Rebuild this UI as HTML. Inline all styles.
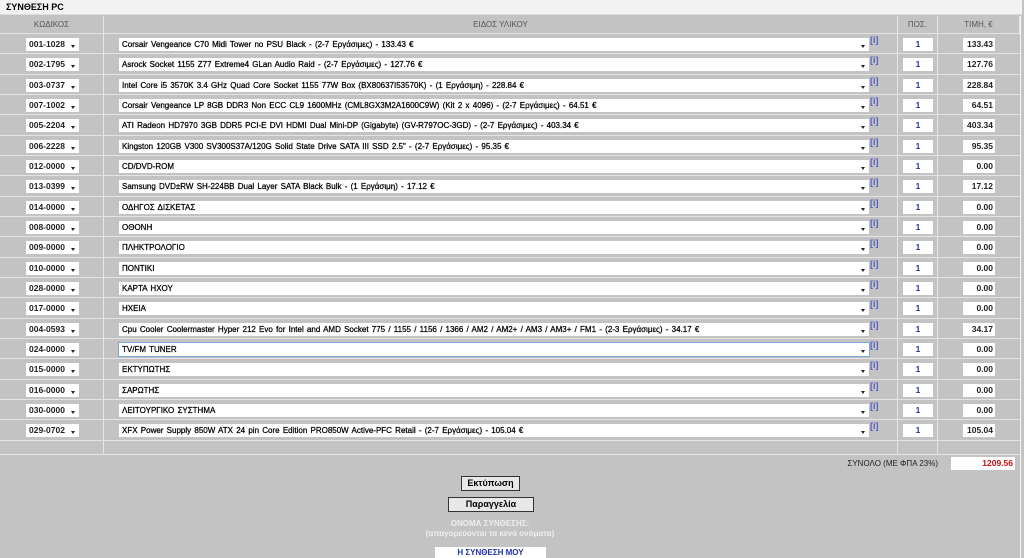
<!DOCTYPE html><html><head><meta charset="utf-8"><style>
body{margin:0;width:1024px;height:558px;background:#c3c3c3;font-family:"Liberation Sans","DejaVu Sans",sans-serif;position:relative;overflow:hidden;font-size:9px}
.hd{position:absolute;left:0;top:0;width:1022px;height:15px;background:#f2f2f2;font-weight:bold;font-size:9px;line-height:15px;padding-left:6px;box-sizing:border-box;border-bottom:1px solid #ddd}
.ch{position:absolute;top:16px;height:17px;line-height:17px;text-align:center;color:#555;font-size:8px;border-right:1px solid #e6e6e6;box-sizing:border-box}
.r{position:absolute;left:0;width:1020px;height:20px;border-top:1px solid #e4e4e4}
.c{position:absolute;top:4px;left:26px;width:53px;height:13px;background:#fff;line-height:13px;padding-left:3px;box-sizing:border-box;font-size:8.5px;font-weight:bold;color:#222}
.c:after,.d:after{content:"";position:absolute;right:4px;top:7px;border:2px solid transparent;border-top:3px solid #222;border-bottom:0}
.d{position:absolute;top:4px;left:119px;width:750px;height:13px;background:#fff;line-height:13px;padding-left:3px;box-sizing:border-box;font-size:8px;color:#000;-webkit-text-stroke:0.25px #000;word-spacing:1px;white-space:nowrap;overflow:hidden}
.i{position:absolute;left:870px;top:1px;color:#5560c0;font-size:9px;line-height:10px;font-weight:bold}
.q{position:absolute;left:903px;top:4px;width:30px;height:13px;background:#fff;color:#2233aa;text-align:center;line-height:13px;font-weight:bold;font-size:8.5px}
.p{position:absolute;left:963px;top:4px;width:32px;height:13px;background:#fff;text-align:right;padding-right:2px;box-sizing:border-box;line-height:13px;font-size:8.5px;font-weight:bold;color:#222}
.vl{position:absolute;width:1px;background:#e6e6e6;top:16px;height:438px}
.btn{position:absolute;background:#e8e8e8;border:1px solid #333;text-align:center;font-size:9px;font-weight:bold;line-height:13px;height:13px}
</style></head><body>
<div class="hd">ΣΥΝΘΕΣΗ PC</div>
<div class="ch" style="left:0;width:104px">ΚΩΔΙΚΟΣ</div>
<div class="ch" style="left:104px;width:794px">ΕΙΔΟΣ ΥΛΙΚΟΥ</div>
<div class="ch" style="left:898px;width:40px">ΠΟΣ.</div>
<div class="ch" style="left:938px;width:82px">ΤΙΜΗ, €</div>
<div class="vl" style="left:103px"></div><div class="vl" style="left:897px"></div><div class="vl" style="left:937px"></div><div class="vl" style="left:1020px;background:#f4f4f4;height:542px"></div>
<div class="r" style="top:33px"><div class="c">001-1028</div><div class="d">Corsair Vengeance C70 Midi Tower no PSU Black - (2-7 Εργάσιμες) - 133.43 €</div><div class="i">[i]</div><div class="q">1</div><div class="p">133.43</div></div>
<div class="r" style="top:53px"><div class="c">002-1795</div><div class="d">Asrock Socket 1155 Z77 Extreme4 GLan Audio Raid - (2-7 Εργάσιμες) - 127.76 €</div><div class="i">[i]</div><div class="q">1</div><div class="p">127.76</div></div>
<div class="r" style="top:74px"><div class="c">003-0737</div><div class="d">Intel Core i5 3570K 3.4 GHz Quad Core Socket 1155 77W Box (BX80637I53570K) - (1 Εργάσιμη) - 228.84 €</div><div class="i">[i]</div><div class="q">1</div><div class="p">228.84</div></div>
<div class="r" style="top:94px"><div class="c">007-1002</div><div class="d">Corsair Vengeance LP 8GB DDR3 Non ECC CL9 1600MHz (CML8GX3M2A1600C9W) (Kit 2 x 4096) - (2-7 Εργάσιμες) - 64.51 €</div><div class="i">[i]</div><div class="q">1</div><div class="p">64.51</div></div>
<div class="r" style="top:114px"><div class="c">005-2204</div><div class="d">ATI Radeon HD7970 3GB DDR5 PCI-E DVI HDMI Dual Mini-DP (Gigabyte) (GV-R797OC-3GD) - (2-7 Εργάσιμες) - 403.34 €</div><div class="i">[i]</div><div class="q">1</div><div class="p">403.34</div></div>
<div class="r" style="top:135px"><div class="c">006-2228</div><div class="d">Kingston 120GB V300 SV300S37A/120G Solid State Drive SATA III SSD 2.5" - (2-7 Εργάσιμες) - 95.35 €</div><div class="i">[i]</div><div class="q">1</div><div class="p">95.35</div></div>
<div class="r" style="top:155px"><div class="c">012-0000</div><div class="d">CD/DVD-ROM</div><div class="i">[i]</div><div class="q">1</div><div class="p">0.00</div></div>
<div class="r" style="top:175px"><div class="c">013-0399</div><div class="d">Samsung DVD±RW SH-224BB Dual Layer SATA Black Bulk - (1 Εργάσιμη) - 17.12 €</div><div class="i">[i]</div><div class="q">1</div><div class="p">17.12</div></div>
<div class="r" style="top:196px"><div class="c">014-0000</div><div class="d">ΟΔΗΓΟΣ ΔΙΣΚΕΤΑΣ</div><div class="i">[i]</div><div class="q">1</div><div class="p">0.00</div></div>
<div class="r" style="top:216px"><div class="c">008-0000</div><div class="d">ΟΘΟΝΗ</div><div class="i">[i]</div><div class="q">1</div><div class="p">0.00</div></div>
<div class="r" style="top:236px"><div class="c">009-0000</div><div class="d">ΠΛΗΚΤΡΟΛΟΓΙΟ</div><div class="i">[i]</div><div class="q">1</div><div class="p">0.00</div></div>
<div class="r" style="top:257px"><div class="c">010-0000</div><div class="d">ΠΟΝΤΙΚΙ</div><div class="i">[i]</div><div class="q">1</div><div class="p">0.00</div></div>
<div class="r" style="top:277px"><div class="c">028-0000</div><div class="d">ΚΑΡΤΑ ΗΧΟΥ</div><div class="i">[i]</div><div class="q">1</div><div class="p">0.00</div></div>
<div class="r" style="top:297px"><div class="c">017-0000</div><div class="d">ΗΧΕΙΑ</div><div class="i">[i]</div><div class="q">1</div><div class="p">0.00</div></div>
<div class="r" style="top:318px"><div class="c">004-0593</div><div class="d">Cpu Cooler Coolermaster Hyper 212 Evo for Intel and AMD Socket 775 / 1155 / 1156 / 1366 / AM2 / AM2+ / AM3 / AM3+ / FM1 - (2-3 Εργάσιμες) - 34.17 €</div><div class="i">[i]</div><div class="q">1</div><div class="p">34.17</div></div>
<div class="r" style="top:338px"><div class="c">024-0000</div><div class="d" style="outline:1px solid #7aa7d8">TV/FM TUNER</div><div class="i">[i]</div><div class="q">1</div><div class="p">0.00</div></div>
<div class="r" style="top:358px"><div class="c">015-0000</div><div class="d">ΕΚΤΥΠΩΤΗΣ</div><div class="i">[i]</div><div class="q">1</div><div class="p">0.00</div></div>
<div class="r" style="top:379px"><div class="c">016-0000</div><div class="d">ΣΑΡΩΤΗΣ</div><div class="i">[i]</div><div class="q">1</div><div class="p">0.00</div></div>
<div class="r" style="top:399px"><div class="c">030-0000</div><div class="d">ΛΕΙΤΟΥΡΓΙΚΟ ΣΥΣΤΗΜΑ</div><div class="i">[i]</div><div class="q">1</div><div class="p">0.00</div></div>
<div class="r" style="top:419px"><div class="c">029-0702</div><div class="d">XFX Power Supply 850W ATX 24 pin Core Edition PRO850W Active-PFC Retail - (2-7 Εργάσιμες) - 105.04 €</div><div class="i">[i]</div><div class="q">1</div><div class="p">105.04</div></div>
<div class="r" style="top:440px"></div>
<div style="position:absolute;left:0;top:454px;width:1020px;border-top:1px solid #e8e8e8"></div>
<div style="position:absolute;left:820px;top:459px;width:118px;text-align:right;font-size:8px;color:#222">ΣΥΝΟΛΟ (ΜΕ ΦΠΑ 23%)</div>
<div style="position:absolute;left:951px;top:457px;width:64px;height:13px;background:#fff;color:#c01010;text-align:right;padding-right:2px;box-sizing:border-box;line-height:13px;font-size:8.5px;font-weight:bold">1209.56</div>
<div class="btn" style="left:461px;top:476px;width:57px">Εκτύπωση</div>
<div class="btn" style="left:448px;top:497px;width:84px">Παραγγελία</div>
<div style="position:absolute;left:420px;top:519px;width:140px;text-align:center;color:#eee;font-size:8px;font-weight:bold;line-height:10px">ΟΝΟΜΑ ΣΥΝΘΕΣΗΣ:<br>(απαγορεύονται τα κενά ονόματα)</div>
<div style="position:absolute;left:435px;top:547px;width:111px;height:11px;background:#fff;color:#2233aa;text-align:center;font-size:8px;font-weight:bold;line-height:11px">Η ΣΥΝΘΕΣΗ ΜΟΥ</div>
</body></html>
